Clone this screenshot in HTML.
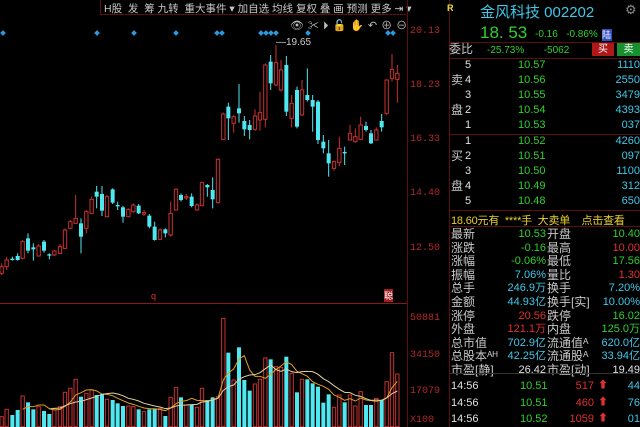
<!DOCTYPE html>
<html><head><meta charset="utf-8">
<style>
*{margin:0;padding:0;box-sizing:border-box}
body{width:640px;height:427px;background:#000;overflow:hidden;position:relative;font-family:"Liberation Sans","Noto Sans CJK SC",sans-serif;color:#ccc}
.a{position:absolute;white-space:nowrap}
.tb{font-size:10.5px;color:#c8c8c8;top:1px}
.ax{font-size:10px;color:#b02828;font-family:"Liberation Mono",monospace;left:410px}
.rp{font-size:12px;line-height:14px}
.lab{color:#c8c8c8}
.g{color:#30d030}.r{color:#e03030}.c{color:#40c8e8}.w{color:#e0e0e0}.y{color:#e8d030}
.hl{position:absolute;height:1px;background:#5a1010}
</style></head><body>
<div class="a" style="left:100px;top:0;width:306px;height:15px;border-bottom:1px solid #5a1010;border-left:1px solid #5a1010"></div>
<div class="a tb" style="left:104px">H股&nbsp; 发&nbsp; 筹 九转&nbsp; 重大事件 ▾ 加自选 均线 复权 叠 画 预测 更多 ⇥ ▾</div>
<div class="a" style="left:290px;top:17px;font-size:11px;color:#bbb;letter-spacing:4px">👁✂⏵🔓✋↶⊕⊖</div>
<div class="a" style="left:407px;top:0;width:1px;height:427px;background:#5a1010"></div>
<div class="a" style="left:449px;top:0;width:1px;height:427px;background:#5a1010"></div>
<div class="hl" style="left:0;top:303px;width:407px;background:#8a1818"></div>
<div class="a" style="left:151px;top:291px;font-size:9px;color:#e03030">q</div>
<div class="a" style="left:384px;top:289px;font-size:9px;color:#fff;background:#a02020">聪</div>
<div class="a ax" style="top:26px">20.13</div>
<div class="a ax" style="top:80px">18.23</div>
<div class="a ax" style="top:134px">16.33</div>
<div class="a ax" style="top:188px">14.40</div>
<div class="a ax" style="top:243px">12.50</div>
<div class="a ax" style="top:313px">50881</div>
<div class="a ax" style="top:350px">34150</div>
<div class="a ax" style="top:386px">17079</div>
<div class="a ax" style="top:415px">X100</div>
<div class="a" style="left:276px;top:37px;font-size:10px;color:#ccc">—19.65</div>
<svg class="a" style="left:0;top:28px" width="407" height="10" id="dm"></svg>
<svg class="a" style="left:0;top:40px" width="440" height="250" viewBox="0 0 1320 750" id="k"></svg>
<svg class="a" style="left:0;top:280px" width="407" height="147" viewBox="0 0 1221 441" id="v"></svg>

<div class="a" style="left:447px;top:3px;font-size:9px;color:#e8e040;font-weight:bold">R</div>
<div class="a c" style="left:480px;top:1px;font-size:15px;font-family:'Liberation Sans','Noto Sans CJK SC',sans-serif">金风科技 002202</div>
<div class="a" style="left:625px;top:2px;font-size:13px;color:#888">⚙</div>
<div class="a g" style="left:480px;top:23px;font-size:17px;font-family:'Liberation Sans',sans-serif">18. 53</div>
<div class="a g" style="left:535px;top:29px;font-size:10px">-0.16&nbsp;&nbsp; -0.86%</div>
<div class="a" style="left:602px;top:29px;width:10px;height:12px;background:#3050c0;color:#fff;font-size:9px;line-height:12px">陆</div>
<div class="hl" style="left:449px;top:42px;width:191px"></div>
<div class="a rp lab" style="left:449px;top:42px">委比</div>
<div class="a g" style="left:487px;top:45px;font-size:10px">-25.73%&nbsp;&nbsp;&nbsp;&nbsp;&nbsp;&nbsp; -5062</div>
<div class="a" style="left:592px;top:43px;width:22px;height:13px;background:#b01818;color:#fff;font-size:10px;text-align:center;line-height:13px">买</div>
<div class="a" style="left:617px;top:43px;width:23px;height:13px;background:#189030;color:#fff;font-size:10px;text-align:center;line-height:13px">卖</div>
<div class="hl" style="left:449px;top:58px;width:191px"></div>
<div id="ob"></div>
<div class="hl" style="left:449px;top:134px;width:191px"></div>
<div class="hl" style="left:449px;top:210px;width:191px"></div>
<div class="a y" style="left:451px;top:212px;font-size:11px;letter-spacing:-0.2px">18.60元有&nbsp; ****手&nbsp; 大卖单&nbsp;&nbsp;&nbsp; 点击查看</div>
<div class="hl" style="left:449px;top:226px;width:191px"></div>
<div id="st"></div>
<div class="hl" style="left:449px;top:373px;width:191px;background:#333"></div>
<div id="tr"></div>

<script>
var K=[[5,680,700,670,705,'r'],[20,660,680,650,690,'r'],[37,656,660,650,662,'c'],[53,648,660,640,662,'c'],[68,605,655,600,658,'r'],[84,595,632,580,640,'c'],[100,622,628,610,662,'c'],[116,618,648,612,650,'r'],[132,605,632,600,638,'c'],[148,643,647,640,658,'c'],[163,633,645,630,648,'r'],[180,620,640,612,642,'r'],[195,570,625,565,628,'r'],[211,545,565,540,568,'r'],[227,535,550,465,552,'r'],[243,550,590,535,640,'c'],[259,515,565,510,580,'r'],[275,478,520,470,522,'r'],[290,455,470,438,505,'c'],[306,462,512,438,528,'c'],[321,470,530,465,532,'r'],[338,448,488,445,492,'c'],[353,495,499,485,510,'c'],[369,502,530,498,548,'c'],[385,508,530,505,532,'r'],[400,495,515,490,518,'r'],[416,497,520,492,522,'c'],[432,518,522,510,528,'r'],[448,527,560,522,565,'c'],[464,560,600,545,602,'c'],[480,570,598,565,600,'r'],[496,568,580,565,592,'c'],[512,520,585,485,590,'r'],[528,448,510,445,512,'r'],[543,465,480,460,485,'c'],[559,470,474,462,480,'r'],[575,470,498,460,502,'c'],[591,495,510,490,512,'r'],[606,428,497,425,498,'r'],[622,435,442,432,470,'c'],[638,450,478,412,505,'c'],[654,358,488,355,490,'r'],[670,222,298,218,300,'r'],[685,200,235,188,300,'c'],[701,230,250,225,278,'r'],[717,205,220,132,248,'c'],[733,243,268,228,288,'c'],[749,255,270,240,298,'c'],[765,228,268,208,272,'r'],[780,218,240,155,272,'r'],[796,75,238,70,262,'r'],[812,65,130,45,150,'c'],[828,68,135,15,138,'r'],[843,90,150,60,155,'r'],[859,75,215,48,228,'c'],[875,190,235,165,262,'r'],[891,150,260,140,265,'c'],[906,150,225,120,228,'r'],[922,165,180,85,185,'c'],[938,180,200,165,275,'c'],[954,185,300,180,312,'c'],[970,305,325,285,340,'c'],[986,340,370,300,410,'c'],[1002,365,385,362,392,'r'],[1018,325,368,290,378,'r'],[1034,336,340,320,375,'c'],[1050,280,300,255,302,'r'],[1066,290,305,265,308,'r'],[1082,255,298,230,300,'r'],[1098,258,270,245,275,'c'],[1113,280,310,270,312,'c'],[1129,270,300,262,302,'r'],[1145,243,262,222,275,'c'],[1160,120,220,118,224,'r'],[1176,88,115,42,125,'r'],[1192,100,118,75,188,'r']];
var V=[410,388,405,390,348,367,388,380,393,402,385,380,337,325,298,350,340,330,345,343,358,360,370,378,378,380,388,395,388,385,385,408,352,323,352,375,375,382,325,360,352,350,115,218,300,202,300,332,312,298,234,238,260,262,230,280,337,298,298,310,320,368,343,382,345,367,345,378,335,375,375,355,360,305,218,282];
var RC='#c83030',CC='#50e8f0',s='',t='';
K.forEach(function(k,i){var x=k[0],col=k[5]=='r'?RC:CC;
s+='<line x1="'+x+'" x2="'+x+'" y1="'+k[3]+'" y2="'+k[4]+'" stroke="'+col+'" stroke-width="3"/>';
var h=Math.max(k[2]-k[1],3);
if(k[5]=='r')s+='<rect x="'+(x-5)+'" y="'+k[1]+'" width="10" height="'+h+'" fill="#000" stroke="'+RC+'" stroke-width="3"/>';
else s+='<rect x="'+(x-6)+'" y="'+k[1]+'" width="12" height="'+h+'" fill="'+CC+'"/>';
var vt=V[i];
if(k[5]=='r')t+='<rect x="'+(x-5)+'" y="'+vt+'" width="10" height="'+(440-vt)+'" fill="#000" stroke="'+RC+'" stroke-width="3"/>';
else t+='<rect x="'+(x-6)+'" y="'+vt+'" width="12" height="'+(441-vt)+'" fill="'+CC+'"/>';
});
document.getElementById('k').innerHTML=s;
function ma(n){var p=[];for(var i=n-1;i<V.length;i++){var a=0;for(var j=0;j<n;j++)a+=V[i-j];p.push(K[i][0]+','+(a/n).toFixed(0));}return p.join(' ');}
t+='<polyline points="'+ma(5)+'" fill="none" stroke="#e0a020" stroke-width="3"/>';
t+='<polyline points="'+ma(10)+'" fill="none" stroke="#e0d0a0" stroke-width="3"/>';
document.getElementById('v').innerHTML=t;
var d='';[3,97,134,176,217,222,261,266,271,276,308,388,393].forEach(function(x){d+='<rect x="'+(x-2)+'" y="3" width="4" height="4" transform="rotate(45 '+x+' 5)" fill="#2a9ae0"/>';});
document.getElementById('dm').innerHTML=d;
var ob='',rows=[['5','10.57','1110'],['4','10.56','2550'],['3','10.55','3479'],['2','10.54','4393'],['1','10.53','037'],['1','10.52','4260'],['2','10.51','097'],['3','10.50','1100'],['4','10.49','312'],['5','10.48','650']];
var side=['','卖','','盘','','','买','','盘',''];
rows.forEach(function(r,i){var y=58+i*15+(i>=5?1:0);
ob+='<div class="a rp lab" style="left:451px;top:'+y+'px">'+side[i]+'</div><div class="a rp w" style="left:465px;top:'+y+'px;font-size:11px">'+r[0]+'</div><div class="a rp g" style="left:518px;top:'+y+'px;font-size:11px">'+r[1]+'</div><div class="a rp c" style="right:0;top:'+y+'px;font-size:11px">'+r[2]+'</div>';});
document.getElementById('ob').innerHTML=ob;
var st=[['最新','10.53','g','开盘','10.40','g'],['涨跌','-0.16','g','最高','10.00','r'],['涨幅','-0.06%','g','最低','17.56','g'],['振幅','7.06%','c','量比','1.30','r'],['总手','246.9万','c','换手','7.20%','c'],['金额','44.93亿','c','换手[实]','10.00%','c'],['涨停','20.56','r','跌停','16.02','g'],['外盘','121.1万','r','内盘','125.0万','g'],['总市值','702.9亿','c','流通值ᴬ','620.0亿','c'],['总股本ᴬᴴ','42.25亿','c','流通股ᴬ','33.94亿','c'],['市盈[静]','26.42','w','市盈[动]','19.49','w']];
var h='';st.forEach(function(r,i){var y=227+i*13.6;
h+='<div class="a rp lab" style="left:451px;top:'+y+'px">'+r[0]+'</div><div class="a rp '+r[2]+'" style="right:94px;top:'+y+'px;font-size:11px">'+r[1]+'</div><div class="a rp lab" style="left:547px;top:'+y+'px">'+r[3]+'</div><div class="a rp '+r[5]+'" style="right:0;top:'+y+'px;font-size:11px">'+r[4]+'</div>';});
document.getElementById('st').innerHTML=h;
var tr='';[['10.51','517','44'],['10.51','460','76'],['10.52','1059','01']].forEach(function(r,i){var y=379+i*16.5;
tr+='<div class="a rp w" style="left:451px;top:'+y+'px;font-size:11px">14:56</div><div class="a rp g" style="left:520px;top:'+y+'px;font-size:11px">'+r[0]+'</div><div class="a rp r" style="right:46px;top:'+y+'px;font-size:11px">'+r[1]+'</div><div class="a rp r" style="left:598px;top:'+y+'px;font-size:10px">⬆</div><div class="a rp c" style="right:0;top:'+y+'px;font-size:11px">'+r[2]+'</div>';});
document.getElementById('tr').innerHTML=tr;
</script>
</body></html>
